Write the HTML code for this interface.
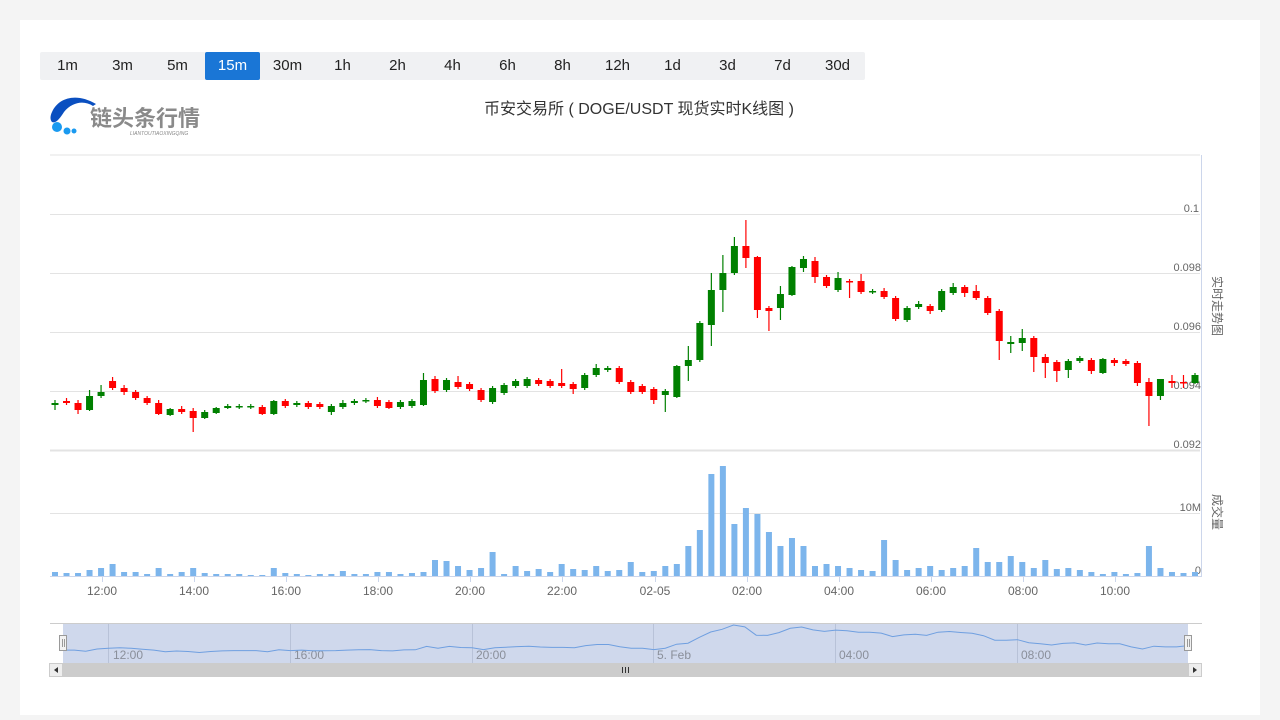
<!DOCTYPE html>
<html><head><meta charset="utf-8">
<style>
html,body{margin:0;padding:0;background:#f4f4f4;width:1280px;height:720px;overflow:hidden;font-family:"Liberation Sans","Noto Sans CJK SC",sans-serif}
.card{position:absolute;left:20px;top:20px;width:1240px;height:695px;background:#fff}
.tabs{position:absolute;left:40px;top:52px;height:28px;display:flex;background:#f0f1f3;border-radius:2px}
.tabs div{width:55px;text-align:center;line-height:28px;font-size:15px;color:#222}
.tabs div.on{background:#1a76d6;color:#fff;border-radius:2px}
svg{position:absolute;left:0;top:0}
</style></head><body>
<div class="card"></div>
<div class="tabs"><div>1m</div><div>3m</div><div>5m</div><div class="on">15m</div><div>30m</div><div>1h</div><div>2h</div><div>4h</div><div>6h</div><div>8h</div><div>12h</div><div>1d</div><div>3d</div><div>7d</div><div>30d</div></div>
<svg width="1280" height="720" id="s" font-family="Liberation Sans, Noto Sans CJK SC, sans-serif">
<path d="M52 112 C58 98 76 92 96 104 L93 106 C84 100 72 102 64 112 C60 118 56 124 52 122 C50 120 50 116 52 112 Z" fill="#0a4fc0"/>
<circle cx="57" cy="127" r="5" fill="#1a9af0"/><circle cx="67" cy="131" r="3.5" fill="#1a9af0"/><circle cx="74" cy="131" r="2.5" fill="#1a9af0"/>
<text x="90" y="126" font-size="22" font-weight="bold" fill="#8a8a8a" font-family="Noto Sans CJK SC, sans-serif">链头条行情</text>
<text x="130" y="135" font-size="5" fill="#888" font-style="italic">LIANTOUTIAOXINGQING</text>
<text x="639" y="114" font-size="16" fill="#333" text-anchor="middle" font-family="Liberation Sans, Noto Sans CJK SC, sans-serif">币安交易所 ( DOGE/USDT 现货实时K线图 )</text>
<g stroke="#e3e3e3" stroke-width="1">
<line x1="50" y1="155" x2="1200" y2="155"/>
<line x1="50" y1="214.5" x2="1200" y2="214.5"/>
<line x1="50" y1="273.5" x2="1200" y2="273.5"/>
<line x1="50" y1="332.5" x2="1200" y2="332.5"/>
<line x1="50" y1="391.5" x2="1200" y2="391.5"/>
<line x1="50" y1="450.5" x2="1200" y2="450.5" stroke-width="2"/>
<line x1="50" y1="513.5" x2="1200" y2="513.5"/>
</g>
<line x1="1201.5" y1="155" x2="1201.5" y2="577" stroke="#ccd6eb"/>
<line x1="50" y1="576.5" x2="1202" y2="576.5" stroke="#ccd6eb"/>
<g font-size="11" fill="#666" text-anchor="end">
<text x="1199" y="212">0.1</text><text x="1201" y="271">0.098</text><text x="1201" y="330">0.096</text><text x="1201" y="389">0.094</text><text x="1201" y="448">0.092</text><text x="1201" y="511">10M</text><text x="1201" y="574">0</text>
</g>
<text transform="translate(1213,276) rotate(90)" font-size="12" fill="#666" font-family="Noto Sans CJK SC, sans-serif">实时走势图</text>
<text transform="translate(1213,494) rotate(90)" font-size="12" fill="#666" font-family="Noto Sans CJK SC, sans-serif">成交量</text>
<g font-size="12" fill="#666" text-anchor="middle">
<text x="102" y="595">12:00</text><text x="194" y="595">14:00</text><text x="286" y="595">16:00</text><text x="378" y="595">18:00</text><text x="470" y="595">20:00</text><text x="562" y="595">22:00</text><text x="655" y="595">02-05</text><text x="747" y="595">02:00</text><text x="839" y="595">04:00</text><text x="931" y="595">06:00</text><text x="1023" y="595">08:00</text><text x="1115" y="595">10:00</text>
</g>
<g stroke="#ccd6eb"><line x1="102.5" y1="577" x2="102.5" y2="582"/><line x1="194.5" y1="577" x2="194.5" y2="582"/><line x1="286.5" y1="577" x2="286.5" y2="582"/><line x1="378.5" y1="577" x2="378.5" y2="582"/><line x1="470.5" y1="577" x2="470.5" y2="582"/><line x1="562.5" y1="577" x2="562.5" y2="582"/><line x1="655.5" y1="577" x2="655.5" y2="582"/><line x1="747.5" y1="577" x2="747.5" y2="582"/><line x1="839.5" y1="577" x2="839.5" y2="582"/><line x1="931.5" y1="577" x2="931.5" y2="582"/><line x1="1023.5" y1="577" x2="1023.5" y2="582"/><line x1="1115.5" y1="577" x2="1115.5" y2="582"/></g>
<line x1="50" y1="623.5" x2="1202" y2="623.5" stroke="#ccc"/>
<rect x="63" y="624" width="1125" height="39" fill="#cfd8ec"/>
<g stroke="#b8c2d8"><line x1="108.5" y1="624" x2="108.5" y2="663"/><line x1="290.5" y1="624" x2="290.5" y2="663"/><line x1="472.5" y1="624" x2="472.5" y2="663"/><line x1="653.5" y1="624" x2="653.5" y2="663"/><line x1="835.5" y1="624" x2="835.5" y2="663"/><line x1="1017.5" y1="624" x2="1017.5" y2="663"/></g>
<g font-size="12" fill="#8a8f9a"><text x="113" y="659">12:00</text><text x="294" y="659">16:00</text><text x="476" y="659">20:00</text><text x="657" y="659">5. Feb</text><text x="839" y="659">04:00</text><text x="1021" y="659">08:00</text></g>
<rect x="49" y="663" width="1153" height="14" fill="#cccccc"/>
<rect x="49.5" y="663.5" width="13" height="13" fill="#eee" stroke="#ccc"/><path d="M58 667 L54 670 L58 673Z" fill="#333"/>
<rect x="1188.5" y="663.5" width="13" height="13" fill="#eee" stroke="#ccc"/><path d="M1193 667 L1197 670 L1193 673Z" fill="#333"/>
<g stroke="#333"><line x1="622.5" y1="667" x2="622.5" y2="673"/><line x1="625.5" y1="667" x2="625.5" y2="673"/><line x1="628.5" y1="667" x2="628.5" y2="673"/></g>
<g id="c"></g>
<rect x="59.5" y="635.5" width="7" height="15" fill="#f2f2f2" stroke="#999"/><line x1="62.5" y1="639" x2="62.5" y2="647" stroke="#999"/><line x1="64.5" y1="639" x2="64.5" y2="647" stroke="#999"/>
<rect x="1184.5" y="635.5" width="7" height="15" fill="#f2f2f2" stroke="#999"/><line x1="1187.5" y1="639" x2="1187.5" y2="647" stroke="#999"/><line x1="1189.5" y1="639" x2="1189.5" y2="647" stroke="#999"/>
</svg>
<script>
var C=[
["g",403,405,400,410],["r",401,403,398,405],["r",403,410,400,414],["g",396,410,390,411],["g",392,396,385,398],["r",381,388,377,390],["r",388,392,385,395],["r",392,398,390,400],["r",398,403,396,405],["r",403,414,400,415],["g",409,415,408,416],["r",409,412,406,414],["r",411,418,408,432],["g",412,418,410,419],["g",408,413,407,414],["g",406,408,404,409],["g",406,407,404,409],["g",406,407,404,409],["r",407,414,405,415],["g",401,414,400,415],["r",401,406,399,408],["g",403,405,401,407],["r",403,407,401,409],["r",404,407,402,409],["g",406,412,404,415],["g",403,407,400,409],["g",401,403,399,405],["g",400,401,398,403],["r",400,406,397,408],["r",402,408,400,409],["g",402,407,400,409],["g",401,406,399,408],
["g",380,405,373,406],["r",379,391,376,393],["g",380,390,378,392],["r",382,387,376,389],["r",384,389,382,391],["r",390,400,388,402],["g",388,402,386,404],["g",385,393,383,395],["g",381,386,379,388],["g",379,386,377,388],["r",380,384,378,386],["r",381,386,379,388],["r",383,386,369,388],["r",384,389,382,394],["g",375,388,373,390],["g",368,375,364,377],["g",368,370,366,372],["r",368,382,366,384],["r",382,392,380,394],["r",386,392,384,394],["r",389,400,387,404],["g",391,395,389,412],["g",366,397,365,398],["g",360,366,346,381],
["g",323,360,321,362],["g",290,325,273,346],["g",273,290,255,312],["g",246,273,237,275],["r",246,258,220,268],["r",257,310,256,318],["r",308,311,306,331],["g",294,308,286,320],["g",267,295,266,296],["g",259,268,256,272],["r",261,277,257,283],["r",277,286,275,288],["g",278,290,272,292],["r",281,282,279,298],["r",281,292,274,294],["g",291,292,289,294],["r",291,297,288,299],["r",298,319,296,321],["g",308,320,306,322],["g",304,307,301,309],["r",306,311,304,314],["g",291,310,289,312],["g",287,293,283,295],["r",287,293,285,297],["r",291,298,285,300],["r",298,313,296,315],["r",311,341,309,360],["g",342,344,336,353],["g",338,343,329,351],["r",338,357,336,372],["r",357,363,354,378],
["r",362,371,360,382],["g",361,370,359,378],["g",358,361,356,363],["r",360,371,358,374],["g",359,373,358,374],["r",360,363,358,366],["r",361,364,359,366],["r",363,383,361,386],["r",382,396,378,426],["g",379,396,379,400],["r",381,383,375,388],["r",382,383,375,388],["g",375,383,373,384]];
var V=[4,3,3,6,8,12,4,4,2,8,2,4,8,3,2,2,2,1,1,8,3,2,1,2,2,5,2,2,4,4,2,3,4,16,15,10,6,8,24,2,10,5,7,4,12,7,6,10,5,6,14,4,5,10,12,30,46,102,110,52,68,62,44,30,38,30,10,12,10,8,6,5,36,16,6,8,10,6,8,10,28,14,14,20,14,8,16,7,8,6,4,2,4,2,3,30,8,4,3,4];
var s="",x0=55,st=(1195-55)/(C.length-1),nav=[],ns=1125/(C.length-1);
C.forEach(function(c,i){var x=x0+i*st,col=c[0]=="g"?"#008000":"#ff0000";
s+='<line x1="'+x+'" y1="'+c[3]+'" x2="'+x+'" y2="'+c[4]+'" stroke="'+col+'" stroke-width="1.2"/>';
s+='<rect x="'+(x-3.5)+'" y="'+c[1]+'" width="7" height="'+Math.max(1.5,c[2]-c[1])+'" fill="'+col+'"/>';
var cl=c[0]=="g"?c[1]:c[2];nav.push((63+i*ns).toFixed(1)+","+(624+(cl-240)*0.16).toFixed(1));});
V.forEach(function(v,i){if(i>=C.length)return;var x=x0+i*st;s+='<rect x="'+(x-3)+'" y="'+(576-v)+'" width="6" height="'+v+'" fill="#7cb5ec"/>';});
s+='<polyline points="'+nav.join(" ")+'" fill="none" stroke="#6f9fe0" stroke-width="1"/>';
document.getElementById("c").innerHTML=s;
</script>
</body></html>
